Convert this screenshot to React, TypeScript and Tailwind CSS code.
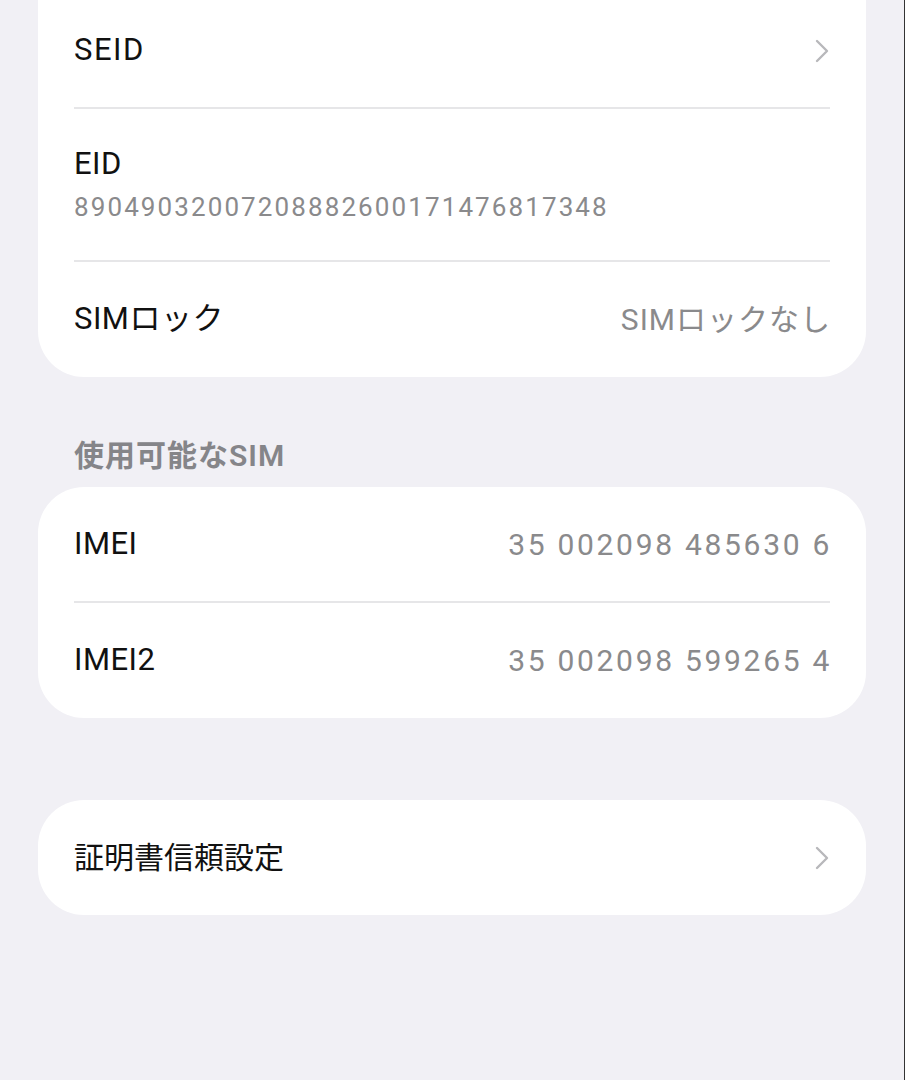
// Device info screen — SIM / IMEI list, One UI style.

const FONT = { fontFamily: 'Roboto, "Noto Sans CJK JP", sans-serif' };

function Chevron() {
  return (
    <svg width="16" height="26" viewBox="0 0 16 26" className="shrink-0">
      <polyline
        points="3,3 13,13 3,23"
        fill="none"
        stroke="#b8b8bb"
        strokeWidth="2.4"
        strokeLinecap="round"
        strokeLinejoin="round"
      />
    </svg>
  );
}

function Divider() {
  return <div className="h-[2px] bg-[#e6e6e8]" />;
}

function Row({
  label,
  value,
  chevron,
  height,
  valueClass = "tracking-[2.7px] -mr-[2px]",
  labelClass = "text-[31px] tracking-[0.5px]",
}: {
  label: string;
  value?: string;
  chevron?: boolean;
  height: string;
  valueClass?: string;
  labelClass?: string;
}) {
  return (
    <div className={`flex items-center justify-between ${height}`}>
      <span className={`text-[#111] ${labelClass}`}>{label}</span>
      {value && (
        <span className={`text-[30px] text-[#8a8a8c] ${valueClass}`}>{value}</span>
      )}
      {chevron && <Chevron />}
    </div>
  );
}

export default function App() {
  return (
    <div
      className="min-h-[1080px] w-full border-r border-[#333] bg-[#f1f0f5] px-[38px]"
      style={FONT}
    >
      <div className="rounded-b-[46px] bg-white px-[36px]">
        <div className="flex h-[107px] items-center justify-between pb-[6px]">
          <span className="text-[31px] tracking-[1.5px] text-[#111]">SEID</span>
          <Chevron />
        </div>
        <Divider />
        <div className="flex h-[151px] flex-col justify-center pb-[2px]">
          <span className="text-[31px] leading-[40px] tracking-[0.5px] text-[#111]">EID</span>
          <span className="mt-[6px] text-[26px] leading-[34px] tracking-[2.1px] text-[#8a8a8c]">
            89049032007208882600171476817348
          </span>
        </div>
        <Divider />
        <Row
          label="SIMロック"
          value="SIMロックなし"
          height="h-[115px]"
          valueClass="tracking-[1px] -mr-[1px]"
        />
      </div>

      <div className="px-[36px] pt-[62px] pb-[14px] text-[30px] font-semibold leading-[34px] tracking-[1px] text-[#858589]">
        使用可能なSIM
      </div>

      <div className="rounded-[46px] bg-white px-[36px]">
        <Row label="IMEI" value="35 002098 485630 6" height="h-[114px]" />
        <Divider />
        <Row label="IMEI2" value="35 002098 599265 4" height="h-[115px]" />
      </div>

      <div className="mt-[82px] rounded-[46px] bg-white px-[36px]">
        <Row label="証明書信頼設定" chevron height="h-[115px]" labelClass="text-[30px]" />
      </div>
    </div>
  );
}
